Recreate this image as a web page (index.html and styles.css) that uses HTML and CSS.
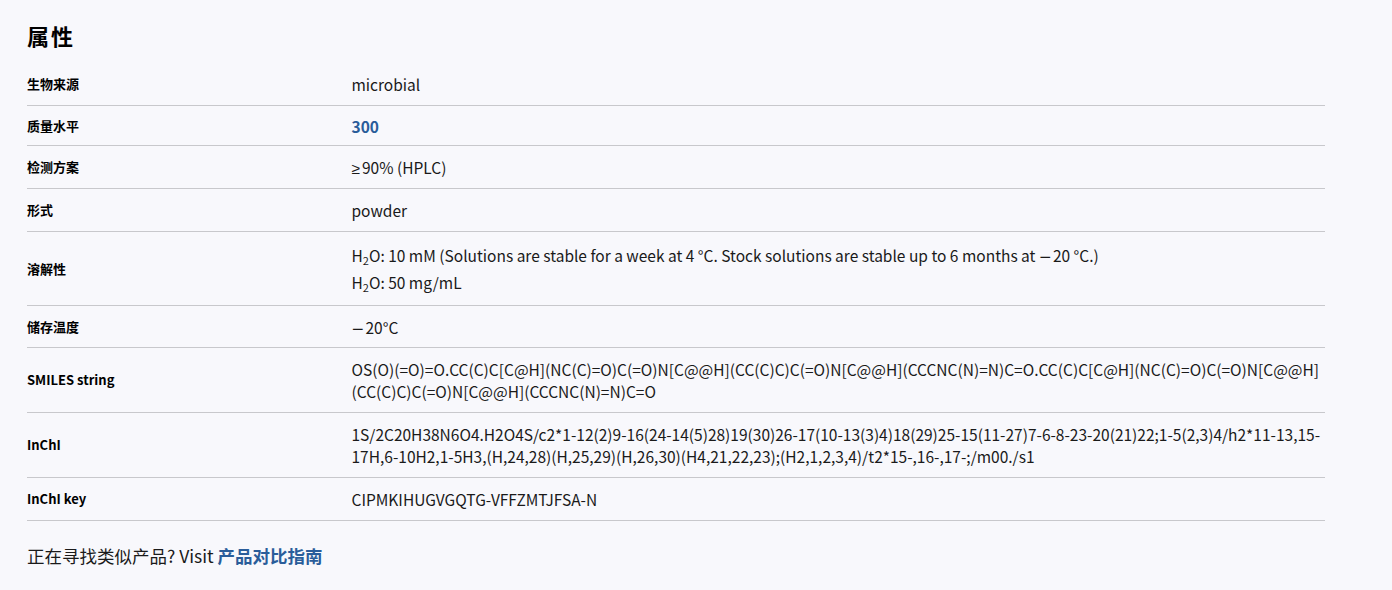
FILE: index.html
```html
<!DOCTYPE html>
<html lang="zh">
<head>
<meta charset="utf-8">
<title>属性</title>
<link rel="stylesheet" href="styles.css">
</head>
<body>
<main class="page">
  <h2 class="title">属性</h2>
  <div class="props">
    <div class="row">
      <div class="label">生物来源</div>
      <div class="value">microbial</div>
    </div>
    <div class="row row--compact">
      <div class="label">质量水平</div>
      <div class="value"><a class="link" href="#">300</a></div>
    </div>
    <div class="row">
      <div class="label">检测方案</div>
      <div class="value"><span class="ge">≥</span>90% (HPLC)</div>
    </div>
    <div class="row">
      <div class="label">形式</div>
      <div class="value">powder</div>
    </div>
    <div class="row">
      <div class="label">溶解性</div>
      <div class="value">
        <p class="line">H<sub>2</sub>O: 10 mM (Solutions are stable for a week at 4 °C. Stock solutions are stable up to 6 months at <span class="minus">−</span>20 °C.)</p>
        <p class="line">H<sub>2</sub>O: 50 mg/mL</p>
      </div>
    </div>
    <div class="row row--tight">
      <div class="label">储存温度</div>
      <div class="value"><span class="minus">−</span>20°C</div>
    </div>
    <div class="row">
      <div class="label">SMILES string</div>
      <div class="value">OS(O)(=O)=O.CC(C)C[C@H](NC(C)=O)C(=O)N[C@@H](CC(C)C)C(=O)N[C@@H](CCCNC(N)=N)C=O.CC(C)C[C@H](NC(C)=O)C(=O)N[C@@H] (CC(C)C)C(=O)N[C@@H](CCCNC(N)=N)C=O</div>
    </div>
    <div class="row">
      <div class="label">InChI</div>
      <div class="value">1S/2C20H38N6O4.H2O4S/c2*1-12(2)9-16(24-14(5)28)19(30)26-17(10-13(3)4)18(29)25-15(11-27)7-6-8-23-20(21)22;1-5(2,3)4/h2*11-13,15-17H,6-10H2,1-5H3,(H,24,28)(H,25,29)(H,26,30)(H4,21,22,23);(H2,1,2,3,4)/t2*15-,16-,17-;/m00./s1</div>
    </div>
    <div class="row">
      <div class="label">InChI key</div>
      <div class="value">CIPMKIHUGVGQTG-VFFZMTJFSA-N</div>
    </div>
  </div>
  <p class="footer">正在寻找类似产品? Visit <a class="link" href="#">产品对比指南</a></p>
</main>
</body>
</html>
```

FILE: styles.css
```css
html, body {
  margin: 0;
  padding: 0;
  background: #f8f8fc;
}
body {
  font-family: "Noto Sans CJK SC", "Noto Sans", sans-serif;
  color: #1a1a1a;
}
.page {
  padding: 18px 67px 0 27px;
}
.title {
  margin: 0 0 11px 0;
  font-size: 22px;
  line-height: 34px;
  font-weight: 700;
  letter-spacing: 2px;
  color: #000;
}
.props {
  display: flex;
  flex-direction: column;
}
.row {
  display: grid;
  grid-template-columns: 25% 75%;
  align-items: center;
  padding: 10px 0;
  border-bottom: 1px solid #c8c8cc;
}
.row--compact {
  padding: 9px 0 8px;
}
.row--compact .value {
  line-height: 20px;
}
.row--tight {
  padding: 10px 0 9px;
}
.label {
  font-size: 13px;
  font-weight: 700;
  color: #000;
  line-height: 22px;
}
.value {
  font-size: 15.5px;
  line-height: 22px;
  color: #1a1a1a;
}
.line {
  margin: 2px 0;
}
.line + .line {
  margin-top: 5px;
}
.ge {
  font-family: "Liberation Sans", sans-serif;
  line-height: 0;
  margin-right: 2px;
}
.minus {
  font-family: "DejaVu Sans", sans-serif;
  line-height: 0;
  margin-right: 1px;
}
sub {
  font-size: 11px;
  line-height: 0;
  vertical-align: -3px;
}
.link {
  color: #2a5d9a;
  font-weight: 700;
  text-decoration: none;
}
.footer {
  margin: 22px 0 0 0;
  font-size: 17.5px;
  line-height: 26px;
}
```
